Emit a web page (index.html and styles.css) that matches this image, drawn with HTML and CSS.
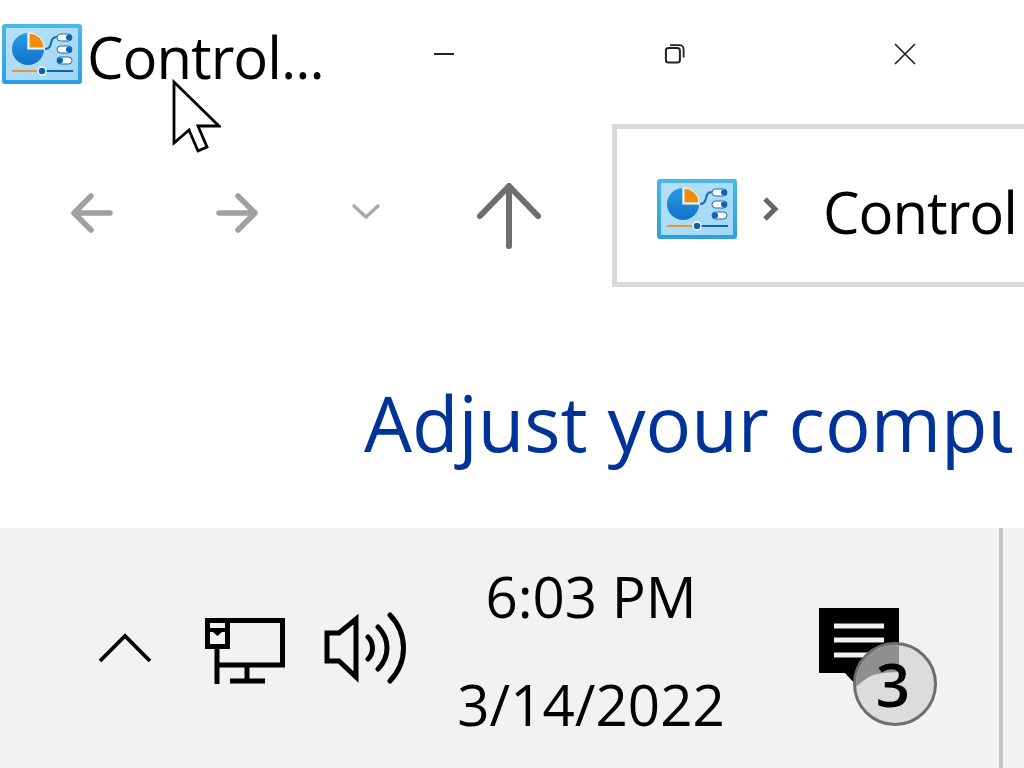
FILE: index.html
```html
<!DOCTYPE html>
<html lang="en">
<head>
<meta charset="utf-8">
<title>Control Panel</title>
<link rel="stylesheet" href="styles.css">
</head>
<body>
<svg class="defs" width="0" height="0" aria-hidden="true">
  <defs>
    <linearGradient id="frameGrad" x1="0" y1="0" x2="0" y2="1"><stop offset="0" stop-color="#4cb8ea"/><stop offset="1" stop-color="#2a9fe0"/></linearGradient>
    <linearGradient id="paneGrad" x1="0" y1="0" x2="1" y2="1"><stop offset="0" stop-color="#b5e1f8"/><stop offset="1" stop-color="#a2d6f4"/></linearGradient>
    <linearGradient id="pieGrad" x1="0" y1="0" x2="0" y2="1"><stop offset="0" stop-color="#2a9ae6"/><stop offset="1" stop-color="#0f72c8"/></linearGradient>
    <symbol id="cp" viewBox="0 0 80 60">
      <rect width="80" height="60" rx="3" fill="url(#frameGrad)"/>
      <rect x="4" y="4" width="72" height="52" fill="url(#paneGrad)"/>
      <path d="M26 9A16 16 0 1 0 42 25H26Z" fill="url(#pieGrad)"/>
      <path d="M27 9A15 15 0 0 1 42 24H27Z" fill="#ee8c0c" stroke="#fff" stroke-width="1"/>
      <path d="M26 9V25H43" fill="none" stroke="#fff" stroke-width="1.2"/>
      <path d="M43 25C52 25 46 13 55 13" fill="none" stroke="#1668b0" stroke-width="2"/>
      <rect x="55" y="10" width="15" height="7" rx="3.5" fill="#fff" stroke="#1668b0"/>
      <circle cx="67" cy="13.5" r="3" fill="#0f62b0"/>
      <rect x="55" y="22" width="15" height="7" rx="3.5" fill="#fff" stroke="#1668b0"/>
      <circle cx="67" cy="25.5" r="3" fill="#0f62b0"/>
      <rect x="55" y="33" width="15" height="7" rx="3.5" fill="#fff" stroke="#1668b0"/>
      <circle cx="58" cy="36.5" r="3" fill="#0f62b0"/>
      <path d="M10 47H40" stroke="#e69530" stroke-width="2"/>
      <path d="M40 47H71" stroke="#0f62b0" stroke-width="2"/>
      <circle cx="40" cy="47" r="4" fill="#0f62b0" stroke="#fff" stroke-width="1.4"/>
    </symbol>
  </defs>
</svg>

<main class="window">
  <header class="titlebar">
    <svg class="app-icon"><use href="#cp"/></svg>
    <span class="title">Control...</span>
    <div class="win-buttons">
      <button class="win-btn" aria-label="Minimize"><svg width="24" height="24" viewBox="0 0 24 24"><path d="M1 12H21" stroke="#222" stroke-width="2" fill="none"/></svg></button>
      <button class="win-btn" aria-label="Restore"><svg width="24" height="24" viewBox="0 0 24 24"><rect x="2.9" y="6" width="14" height="14.6" rx="2.5" fill="none" stroke="#222" stroke-width="2"/><path d="M7 3.2H16.5A4 4 0 0 1 20.6 7V15.5" fill="none" stroke="#222" stroke-width="1.8"/></svg></button>
      <button class="win-btn" aria-label="Close"><svg width="24" height="24" viewBox="0 0 24 24"><path d="M2 2L22 22M22 2L2 22" stroke="#222" stroke-width="1.7" fill="none"/></svg></button>
    </div>
  </header>

  <nav class="navrow">
    <svg class="nav-back" width="42" height="40" viewBox="0 0 42 40"><path d="M39 20H4M20 3L3 20L20 37" fill="none" stroke="#a0a0a0" stroke-width="5.5" stroke-linecap="round" stroke-linejoin="round"/></svg>
    <svg class="nav-fwd" width="42" height="40" viewBox="0 0 42 40"><path d="M3 20H38M22 3L39 20L22 37" fill="none" stroke="#a0a0a0" stroke-width="5.5" stroke-linecap="round" stroke-linejoin="round"/></svg>
    <svg class="nav-down" width="30" height="18" viewBox="0 0 30 18"><path d="M2 3L15 15L28 3" fill="none" stroke="#a8a8a8" stroke-width="3.2"/></svg>
    <svg class="nav-up" width="64" height="66" viewBox="0 0 64 66"><path d="M32 63V4M3 33L32 3L61 33" fill="none" stroke="#6e6e6e" stroke-width="6" stroke-linecap="round" stroke-linejoin="round"/></svg>
    <div class="address">
      <svg class="app-icon"><use href="#cp"/></svg>
      <svg class="crumb" width="18" height="26" viewBox="0 0 18 26"><path d="M3 3L13 13L3 23" fill="none" stroke="#666" stroke-width="5"/></svg>
      <span class="address-text">Control</span>
    </div>
  </nav>

  <div class="heading-wrap">
    <h1 class="heading">Adjust your computer's settings</h1>
  </div>
</main>

<footer class="taskbar">
  <svg class="tray-chevron" width="54" height="32" viewBox="0 0 54 32"><path d="M2 29L27 4L52 29" fill="none" stroke="#000" stroke-width="3.8"/></svg>
  <svg class="tray-net" width="82" height="68" viewBox="0 0 82 68">
    <path d="M24 3.5H78.5V48H13M13 30V67M26 64H61M43 48V64" fill="none" stroke="#000" stroke-width="5"/>
    <rect x="3.5" y="3.5" width="20" height="26" fill="#f2f2f2" stroke="#000" stroke-width="5"/>
    <path d="M3 13H24" stroke="#000" stroke-width="4" fill="none"/>
    <path d="M9 15L13.5 19L18 15Z" fill="#000"/>
  </svg>
  <svg class="tray-vol" width="82" height="72" viewBox="0 0 82 72">
    <path d="M3 21H15L32 7V65L15 49H3Z" fill="none" stroke="#000" stroke-width="5"/>
    <path d="M44 25C50 31 50 41 44 47M54 15C66 27 66 45 54 57M66 3C84 22 84 50 66 69" fill="none" stroke="#000" stroke-width="5" stroke-linecap="round"/>
  </svg>
  <div class="clock">
    <div class="clock-line">6:03 PM</div>
    <div class="clock-line">3/14/2022</div>
  </div>
  <div class="notify">
    <svg class="notify-icon" width="80" height="78" viewBox="0 0 80 78">
      <path d="M0 0H80V65H40V78H38L26 65H0Z" fill="#000"/>
      <path d="M15 18H65M15 32H65M15 47H65" stroke="#f2f2f2" stroke-width="5" fill="none"/>
    </svg>
    <div class="badge">
      <svg class="badge-shade" viewBox="0 0 84 84"><path d="M46 2H2V46Q14 34 24 32T46 30Z" fill="#8f8f8f"/></svg>
      <span class="badge-num">3</span>
    </div>
  </div>
  <div class="divider"></div>
</footer>

<svg class="cursor" width="50" height="78" viewBox="0 0 50 78"><path d="M3 4V65L18 52L27 73L36 69L27 48H48Z" fill="#fff" stroke="#000" stroke-width="2.8"/></svg>
</body>
</html>
```

FILE: styles.css
```css
html, body {
  margin: 0;
  padding: 0;
}
body {
  width: 1024px;
  height: 768px;
  overflow: hidden;
  display: flex;
  flex-direction: column;
  position: relative;
  background: #fff;
  font-family: "Open Sans", "Noto Sans", "Liberation Sans", sans-serif;
}
.defs { position: absolute; }

.window {
  height: 528px;
  flex: none;
  display: flex;
  flex-direction: column;
}
.titlebar {
  height: 108px;
  display: flex;
  align-items: center;
  padding: 0 4px 0 2px;
  box-sizing: border-box;
}
.app-icon {
  width: 80px;
  height: 60px;
  flex: none;
  display: block;
}
.title {
  font-size: 58px;
  letter-spacing: -1px;
  color: #000;
  margin: 6px 0 0 5px;
  line-height: 1;
}
.win-buttons {
  margin-left: auto;
  display: flex;
}
.win-btn {
  width: 230px;
  height: 108px;
  border: 0;
  background: none;
  padding: 0;
  display: flex;
  align-items: center;
  justify-content: center;
}

.navrow {
  height: 180px;
  margin-top: 7px;
  display: flex;
  align-items: center;
  padding-left: 71px;
  box-sizing: border-box;
}
.nav-back { flex: none; margin-top: 16px; }
.nav-fwd { flex: none; margin: 16px 0 0 103px; }
.nav-down { flex: none; margin: 12px 0 0 93px; }
.nav-up { flex: none; margin: 22px 0 0 96px; }
.address {
  flex: 1;
  height: 163px;
  margin-left: 71px;
  border: 5px solid #d9d9d9;
  border-right: 0;
  box-sizing: border-box;
  display: flex;
  align-items: center;
  padding: 8px 0 0 40px;
  overflow: hidden;
}
.crumb { flex: none; margin-left: 25px; }
.address-text {
  font-size: 58px;
  margin: 4px 0 0 43px;
  letter-spacing: -1px;
  color: #000;
}

.heading-wrap {
  margin: 73px 12px 0 364px;
  overflow: hidden;
}
.heading {
  margin: 0;
  font-size: 76px;
  font-weight: 400;
  line-height: 110px;
  color: #003399;
  white-space: nowrap;
}

.taskbar {
  flex: 1;
  background: #f2f2f2;
  display: flex;
  align-items: center;
  position: relative;
}
.tray-chevron { flex: none; margin-left: 98px; }
.tray-net { flex: none; margin: 5px 0 0 52px; }
.tray-vol { flex: none; margin-left: 38px; }
.clock {
  width: 300px;
  margin: 5px 0 0 35px;
  flex: none;
  text-align: center;
  font-size: 56.5px;
  color: #000;
}
.clock-line {
  line-height: 108px;
}
.notify {
  position: relative;
  margin: 40px 0 0 78px;
  width: 120px;
  height: 120px;
  flex: none;
}
.notify-icon {
  display: block;
}
.badge {
  position: absolute;
  left: 34px;
  top: 34px;
  width: 84px;
  height: 84px;
  box-sizing: border-box;
  border-radius: 50%;
  border: 3.5px solid #6e6e6e;
  background: #dcdcdc;
  display: flex;
  align-items: center;
  justify-content: center;
  overflow: hidden;
}
.badge-shade {
  position: absolute;
  left: -3px;
  top: -3px;
  width: 84px;
  height: 84px;
}
.badge-num {
  position: relative;
  right: 2px;
  font-size: 60px;
  font-weight: 600;
  line-height: 1;
  color: #000;
}
.divider {
  margin-left: auto;
  margin-right: 21px;
  width: 4px;
  align-self: stretch;
  background: #c4c4c4;
}
.cursor {
  position: absolute;
  left: 171px;
  top: 78px;
}
```
